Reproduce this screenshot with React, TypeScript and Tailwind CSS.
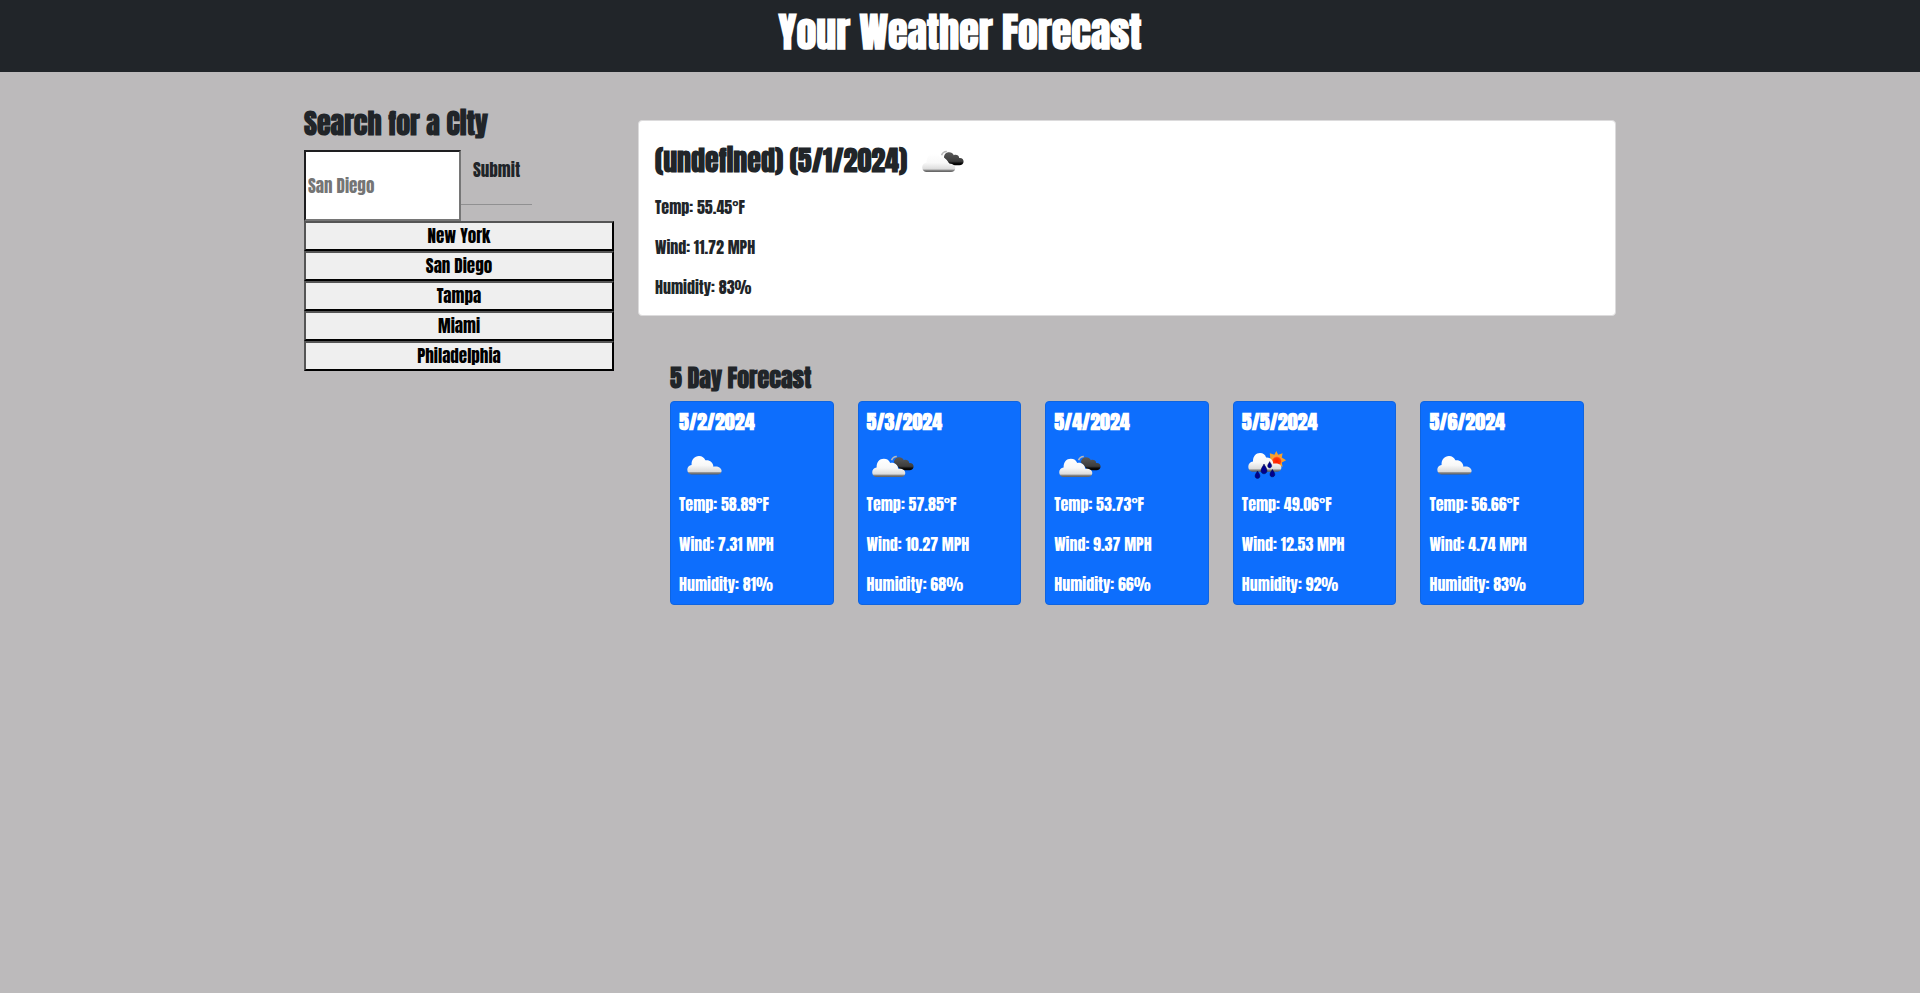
import { useId } from "react";

type IconKind = "cloud" | "broken" | "rain";

type Day = {
  date: string;
  icon: IconKind;
  temp: string;
  wind: string;
  humidity: string;
};

const cities = ["New York", "San Diego", "Tampa", "Miami", "Philadelphia"];

const days: Day[] = [
  { date: "5/2/2024", icon: "cloud", temp: "58.89", wind: "7.31", humidity: "81" },
  { date: "5/3/2024", icon: "broken", temp: "57.85", wind: "10.27", humidity: "68" },
  { date: "5/4/2024", icon: "broken", temp: "53.73", wind: "9.37", humidity: "66" },
  { date: "5/5/2024", icon: "rain", temp: "49.06", wind: "12.53", humidity: "92" },
  { date: "5/6/2024", icon: "cloud", temp: "56.66", wind: "4.74", humidity: "83" },
];

function WeatherIcon({ kind, className }: { kind: IconKind; className: string }) {
  const id = useId();
  const light = `${id}-light`;
  const dark = `${id}-dark`;
  const sun = `${id}-sun`;
  return (
    <svg viewBox="0 0 50 50" className={className} aria-hidden="true">
      <defs>
        <linearGradient id={light} x1="0" y1="0" x2="0" y2="1">
          <stop offset="0" stopColor="#fff" />
          <stop offset="0.5" stopColor="#f8f8f8" />
          <stop offset="0.84" stopColor="#dcdcdc" />
          <stop offset="0.9" stopColor="#8a8a8a" />
          <stop offset="1" stopColor="#5c5c5c" />
        </linearGradient>
        <linearGradient id={dark} x1="0" y1="0" x2="0" y2="1">
          <stop offset="0" stopColor="#5a5a5a" />
          <stop offset="0.7" stopColor="#3c3c3c" />
          <stop offset="0.85" stopColor="#0a0a0a" />
          <stop offset="1" stopColor="#000" />
        </linearGradient>
        <radialGradient id={sun} cx="0.5" cy="0.6" r="0.5">
          <stop offset="0" stopColor="#ff1a00" />
          <stop offset="0.7" stopColor="#ff3a0a" />
          <stop offset="1" stopColor="#ff9a3c" />
        </radialGradient>
      </defs>
      {kind === "cloud" && (
        <path
          fill={`url(#${light})`}
          d="M12.5 34.5C10 34.5 8.3 32.3 8.3 29.8C8.3 27.2 10.1 25.5 12.6 25C12.2 19.5 15.6 16 20 16C23.2 16 25.2 17.6 26.4 20.3C30.3 19.6 34.2 22 34.4 26.7C38.5 25.6 42.6 27.7 42.6 30.8C42.6 33.3 40.8 34.5 38.5 34.5Z"
        />
      )}
      {kind === "broken" && (
        <>
          <path
            fill="none"
            stroke="#b9b9b9"
            strokeWidth="1.6"
            d="M24.6 20.2C25.4 17.8 27.4 16.6 29.8 16.5"
          />
          <path
            fill={`url(#${dark})`}
            d="M27 22.5C27 19.4 29 17.2 32 17.2C34.4 17.2 36 18.4 36.8 20.2C39.4 19.2 42 20.6 42.2 23C44.9 22.6 46.6 24.2 46.6 26.5C46.6 28.9 44.8 30.2 42.4 30.2H34Z"
          />
          <path
            fill={`url(#${light})`}
            d="M9.7 37C7.2 37 5.2 35.2 5.2 32.3C5.2 29.6 7 27.8 9.6 27.4C9.6 22 12.4 18.8 16.8 18.8C20 18.8 22.2 20.4 23.2 22.9C27.3 22.1 31 24.6 31.2 28.8C35.2 28.2 38.3 30 38.3 33C38.3 35.7 36.4 37 34 37Z"
          />
        </>
      )}
      {kind === "rain" && (
        <g transform="translate(1.8 1.8)">
          <path
            fill="#f5a12b"
            d="M32.5 9.2L34.4 13L38.8 11.4L38 15.8L42.3 18.4L38 20.6L38.8 25L34.8 24L32.5 27.5L30.3 23.5L26 25L26.8 20.8L23 18.6L26.5 16.2L26 11.5L30.6 13Z"
          />
          <circle cx="33" cy="18.6" r="5.2" fill={`url(#${sun})`} />
          <path
            fill={`url(#${light})`}
            d="M9.5 30C6.6 30 4.5 28 4.5 25C4.5 22.1 6.3 20.2 9.2 19.8C9 14.8 12 11.3 16.2 11.3C19.4 11.3 21.4 12.8 22.3 15.8C26.2 15.4 29.2 17.8 29.5 22C34 21 37.6 22.7 37.6 25.8C37.6 28.6 35.8 30 33.2 30Z"
          />
          <g fill="#00008f" stroke="#000b45" strokeWidth="0.5">
            <path d="M20.2 22.2C21.3 24.8 23.2 26.4 23.2 28.8C23.2 30.7 21.9 32 20.2 32C18.5 32 17.2 30.7 17.2 28.8C17.2 26.4 19.1 24.8 20.2 22.2Z" />
            <path d="M25.9 19.8C26.6 21.5 27.9 22.6 27.9 24C27.9 25.3 27 26.1 25.9 26.1C24.8 26.1 23.9 25.3 23.9 24C23.9 22.6 25.2 21.5 25.9 19.8Z" />
            <path d="M13.7 29.2C14.6 31.2 16.1 32.4 16.1 34.2C16.1 35.7 15.1 36.6 13.7 36.6C12.3 36.6 11.3 35.7 11.3 34.2C11.3 32.4 12.8 31.2 13.7 29.2Z" />
            <path d="M28.6 27.6C29.5 29.6 31 30.8 31 32.6C31 34.1 30 35 28.6 35C27.2 35 26.2 34.1 26.2 32.6C26.2 30.8 27.7 29.6 28.6 27.6Z" />
          </g>
        </g>
      )}
    </svg>
  );
}

export default function App() {
  return (
    <div className="min-h-screen bg-[#bcbabb] font-[Impact,Anton,'Roboto_Condensed',sans-serif] text-base leading-6 text-[#212529]">
      <header className="bg-[#212529] pt-2 pb-4 text-center text-white">
        <h1 className="text-[40px] leading-[48px] font-bold">Your Weather Forecast</h1>
      </header>

      <main className="mx-auto grid max-w-[1336px] grid-cols-[310fr_978fr] items-start gap-6 px-3 pt-8">
        <aside className="pt-0.5 text-[17px]">
          <h2 className="mb-2.5 text-[28px] leading-[34px] font-bold">
            <label htmlFor="city">Search for a City</label>
          </h2>
          <form className="flex items-start" onSubmit={(e) => e.preventDefault()}>
            <input
              id="city"
              type="text"
              placeholder="San Diego"
              className="h-[71px] w-[157px] border-2 border-t-[#1e1e20] border-r-[#767676] border-b-[#767676] border-l-[#1e1e20] bg-white px-0.5 placeholder:text-[#757575]"
            />
            <button
              type="submit"
              className="h-[55px] border-b border-[#909091] px-3 pt-2 pb-[22px] text-center"
            >
              Submit
            </button>
          </form>
          <ul>
            {cities.map((city) => (
              <li key={city}>
                <button
                  type="button"
                  className="block h-[30px] w-full border-2 border-t-[#555] border-r-black border-b-black border-l-[#555] bg-[#efefef] text-black"
                >
                  {city}
                </button>
              </li>
            ))}
          </ul>
        </aside>

        <div className="pt-4">
          <section className="rounded border border-[#dcdbdc] bg-white px-4 pt-3.5 pb-4">
            <h2 className="flex items-center text-[28px] leading-[50px] font-bold">
              (undefined) (5/1/2024)
              <WeatherIcon kind="broken" className="ml-2.5 size-[50px]" />
            </h2>
            <p className="mt-2.5">Temp: 55.45°F</p>
            <p className="mt-4">Wind: 11.72 MPH</p>
            <p className="mt-4">Humidity: 83%</p>
          </section>

          <section className="px-8 pt-12">
            <h3 className="mb-2 text-[24px] leading-[29px] font-bold">5 Day Forecast</h3>
            <div className="grid grid-cols-5 gap-6">
              {days.map((day) => (
                <article
                  key={day.date}
                  className="rounded border border-[#0f64e0] bg-[#0d6efd] p-2 text-white"
                >
                  <h4 className="text-[20px] leading-6 font-bold">{day.date}</h4>
                  <WeatherIcon kind={day.icon} className="mt-1.5 size-[50px]" />
                  <p className="mt-0.5">Temp: {day.temp}°F</p>
                  <p className="mt-4">Wind: {day.wind} MPH</p>
                  <p className="mt-4">Humidity: {day.humidity}%</p>
                </article>
              ))}
            </div>
          </section>
        </div>
      </main>
    </div>
  );
}
